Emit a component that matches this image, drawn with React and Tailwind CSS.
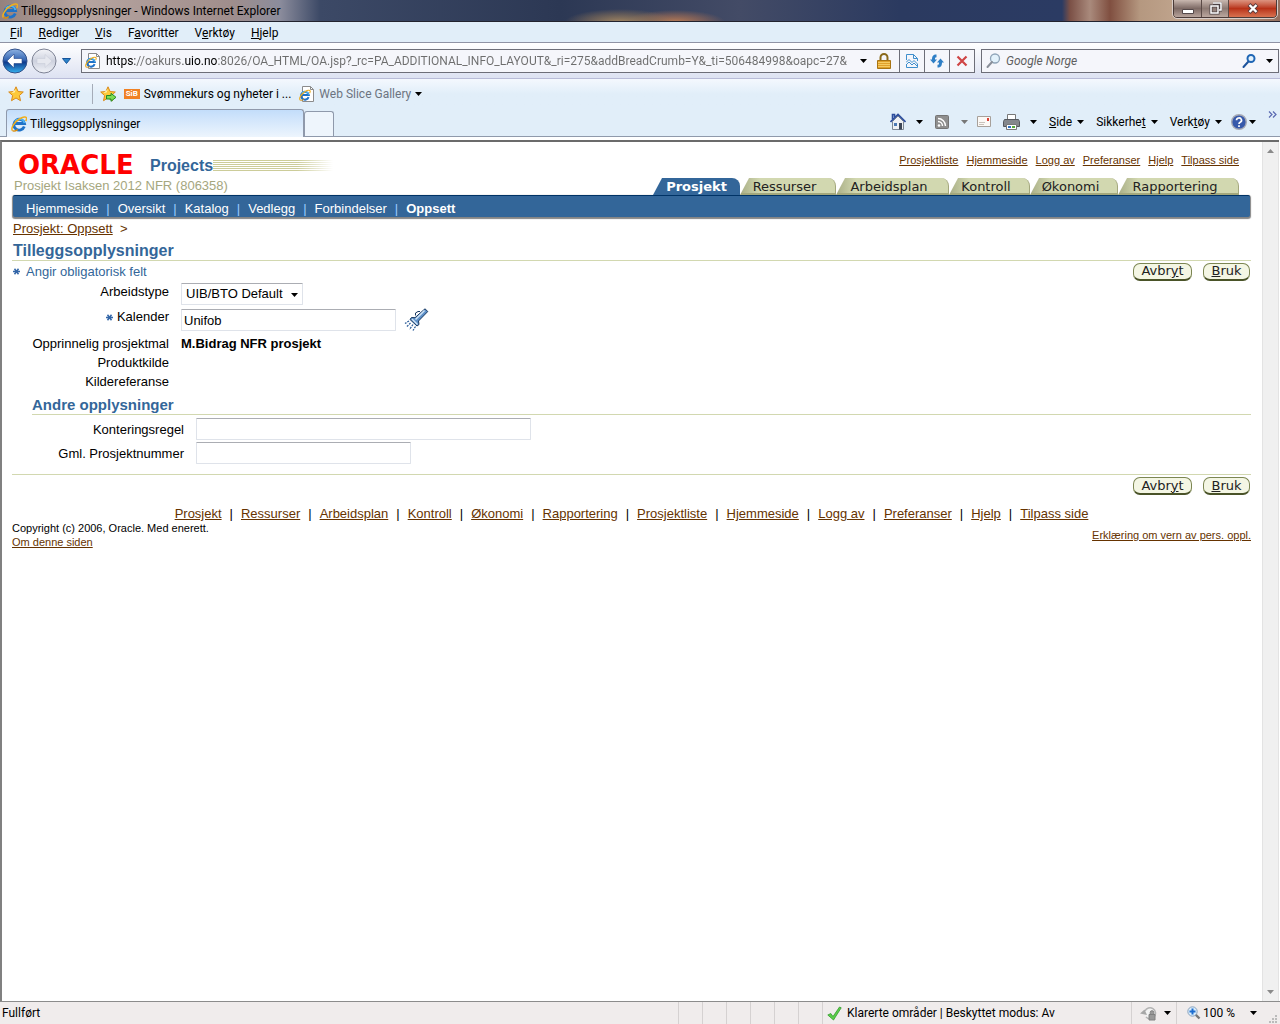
import { useState } from "react";

const topLinks = ["Prosjektliste", "Hjemmeside", "Logg av", "Preferanser", "Hjelp", "Tilpass side"];
const tabs = [
  { name: "Prosjekt", width: "w-[87px]" },
  { name: "Ressurser", width: "w-[96px]" },
  { name: "Arbeidsplan", width: "w-[113px]" },
  { name: "Kontroll", width: "w-[81px]" },
  { name: "Økonomi", width: "w-[88px]" },
  { name: "Rapportering", width: "w-[121px]" },
];
const subTabs = ["Hjemmeside", "Oversikt", "Katalog", "Vedlegg", "Forbindelser", "Oppsett"];
const footerLinks = [...tabs.map((t) => t.name), ...topLinks];

function Caret({ className = "fill-black" }) {
  return (
    <svg width="7" height="4" viewBox="0 0 7 4" className={`shrink-0 ${className}`} aria-hidden="true">
      <path d="M0 0h7L3.5 4z" />
    </svg>
  );
}

function IeMark() {
  return (
    <>
      <path d="M13.3 10.6a5.4 5.4 0 1 1 .2-3.1H4.2" fill="none" stroke="#1f72c8" strokeWidth="2.8" />
      <path d="M13.4 7a5.3 5.3 0 0 0-9.6-1.6" fill="none" stroke="#4db5f2" strokeWidth="1.6" />
      <path d="M1.5 14.6C-.6 12.4 3.4 5.6 9.2 2.5c3-1.6 5.6-2 6.2-.8.4.8.1 2-.7 3.3" fill="none" stroke="#f0ae1c" strokeWidth="1.5" />
      <path d="M1.5 14.6c1.1.9 3.3.2 5.3-1" fill="none" stroke="#d98c0b" strokeWidth="1.3" />
    </>
  );
}

function IeIcon({ page }) {
  if (!page) {
    return (
      <svg width="16" height="16" viewBox="0 0 16 16" className="shrink-0" aria-hidden="true">
        <IeMark />
      </svg>
    );
  }
  return (
    <svg width="16" height="16" viewBox="0 0 16 16" className="shrink-0" aria-hidden="true">
      <path d="M3.5.5h8l3 3v12h-11z" fill="#fff" stroke="#8b8b8b" />
      <path d="M11.5.5v3h3" fill="none" stroke="#8b8b8b" />
      <g transform="translate(0 3.5) scale(.72)">
        <IeMark />
      </g>
    </svg>
  );
}

function Star({ add }) {
  return (
    <svg width="17" height="16" viewBox="0 0 17 16" className="shrink-0" aria-hidden="true">
      <path d="m8 .8 2.1 4.7 5.2.5-3.9 3.5 1.1 5.2L8 12l-4.5 2.7 1.1-5.2L.7 6l5.2-.5z" fill="#fdc93a" stroke="#d98a1c" />
      <path d="M8 3 6.6 6.5 3.5 7z" fill="#fff3b0" />
      {add && <path d="M6.5 9.5h4.5V7.3l5 4-5 4v-2.3H6.5z" fill="#7ddb52" stroke="#238a24" />}
    </svg>
  );
}

function RoundButton({ forward }) {
  return (
    <button type="button" aria-label={forward ? "Frem" : "Tilbake"} className="shrink-0">
      <svg width="26" height="26" viewBox="0 0 26 26">
        <defs>
          <linearGradient id="backFill" x1="0" y1="0" x2="0" y2="1">
            <stop offset="0" stopColor="#8fb3e2" />
            <stop offset=".45" stopColor="#3566b4" />
            <stop offset=".55" stopColor="#0f3a8c" />
            <stop offset="1" stopColor="#35b3f0" />
          </linearGradient>
          <linearGradient id="forwardFill" x1="0" y1="0" x2="0" y2="1">
            <stop offset="0" stopColor="#f4f5f9" />
            <stop offset=".5" stopColor="#cdd1de" />
            <stop offset="1" stopColor="#f1f3f8" />
          </linearGradient>
        </defs>
        <circle cx="13" cy="13" r="12" fill={forward ? "url(#forwardFill)" : "url(#backFill)"} stroke={forward ? "#7d8294" : "#31508a"} />
        <path
          d={forward ? "M21 13l-7-6.5v4H6v5h8v4z" : "M5 13l7-7v4.5h8v5h-8V20z"}
          fill={forward ? "#e6e8ef" : "#fff"}
          stroke={forward ? "#c9cdd8" : "#25468a"}
          strokeWidth=".6"
        />
      </svg>
    </button>
  );
}

function Magnifier({ dark }) {
  return (
    <svg width="15" height="16" viewBox="0 0 15 16" className="shrink-0" aria-hidden="true">
      <circle cx="9" cy="5.5" r={dark ? 3.5 : 4.5} fill="#e2f1fb" stroke={dark ? "#1f66b5" : "#8fa4b8"} strokeWidth={dark ? 2 : 1.3} />
      <path d="M6 9 1.5 14" stroke={dark ? "#1d539c" : "#8a8f99"} strokeWidth="2" strokeLinecap="round" />
    </svg>
  );
}

function TitleBar() {
  return (
    <header className="flex h-[22px] items-start justify-between border-b border-[#22232f] bg-[radial-gradient(ellipse_55px_13px_at_620px_22px,#a08460,#8f755880_60%,transparent),radial-gradient(ellipse_50px_12px_at_675px_22px,#b87a54,#a8705480_60%,transparent),linear-gradient(to_right,#94827e_0px,#b7a5a0_80px,#a08e8c_230px,#8b8c9c_280px,#3c4966_320px,#2c3854_560px,#434b66_740px,#2b3a60_900px,#2b3b63_1062px,#7b5046_1070px,#a98a7c_1090px,#804f40_1110px,#b59880_1140px,#c6ab94_1200px,#94705f_1280px)]">
      <div className="flex items-center gap-[3px] pt-[3px] pl-[2px]">
        <IeIcon />
        <h1 className="text-[12px] leading-4">Tilleggsopplysninger - Windows Internet Explorer</h1>
      </div>
      <div className="mr-[3px] flex h-[18px] overflow-hidden rounded-b-[4px] border border-t-0 border-[#4b3b38] outline outline-[#d9cdc8]">
        <button type="button" aria-label="Minimer" className="flex w-[28px] items-center justify-center border-r border-[#5b4a46] bg-linear-to-b from-[#c9b8b0] via-[#7d6a65] to-[#b8a49c]">
          <svg width="12" height="12" viewBox="0 0 12 12"><path d="M.5 6.5h11v4H.5z" fill="#fff" stroke="#55494a" /></svg>
        </button>
        <button type="button" aria-label="Gjenopprett" className="flex w-[27px] items-center justify-center border-r border-[#5b4a46] bg-linear-to-b from-[#c9b8b0] via-[#8d7a73] to-[#bba79e]">
          <svg width="13" height="13" viewBox="0 0 13 13">
            <path d="M4 1h8v7h-2M2 4h7v7H2z" fill="none" stroke="#4d4244" strokeWidth="3" />
            <path d="M4 1h8v7h-2M2 4h7v7H2z" fill="none" stroke="#fff" strokeWidth="1.5" />
          </svg>
        </button>
        <button type="button" aria-label="Lukk" className="flex w-[47px] items-center justify-center bg-linear-to-b from-[#dc9480] via-[#b83218] to-[#d8714f]">
          <svg width="12" height="11" viewBox="0 0 12 11">
            <path d="m2 1.5 8 8m0-8-8 8" stroke="#5a3a3c" strokeWidth="4" />
            <path d="m2.5 2 7 7m0-7-7 7" stroke="#fff" strokeWidth="2.4" />
          </svg>
        </button>
      </div>
    </header>
  );
}

function MenuBar() {
  const item = "hover:bg-white/60";
  return (
    <nav className="flex h-[21px] items-center gap-4 border-b border-[#8f93a5] bg-[#e1eef9] pt-px pl-[10px] text-[12px]">
      <button type="button" className={item}><u>F</u>il</button>
      <button type="button" className={item}><u>R</u>ediger</button>
      <button type="button" className={item}><u>V</u>is</button>
      <button type="button" className={item}>F<u>a</u>voritter</button>
      <button type="button" className={item}>V<u>e</u>rktøy</button>
      <button type="button" className={item}><u>H</u>jelp</button>
    </nav>
  );
}

function AddressRow() {
  const [url, setUrl] = useState(
    "https://oakurs.uio.no:8026/OA_HTML/OA.jsp?_rc=PA_ADDITIONAL_INFO_LAYOUT&_ri=275&addBreadCrumb=Y&_ti=506484998&oapc=27&"
  );
  const cell = "flex w-[25px] items-center justify-center border-l border-[#6d6e78]";
  return (
    <div className="flex h-[36px] items-center border-b border-[#b9bcd8] bg-linear-to-b from-white to-[#dde2f2] pr-px pl-[2px]">
      <RoundButton />
      <span className="ml-[3px] flex"><RoundButton forward /></span>
      <button type="button" aria-label="Nylige sider" className="px-[5px]">
        <svg width="9" height="6" viewBox="0 0 9 6"><path d="M.5.5h8l-4 5z" fill="#2b82c9" stroke="#17559b" /></svg>
      </button>
      <div className="ml-[5px] flex h-[24px] min-w-0 flex-1 items-stretch border border-[#6d6e78] bg-[#f5f6fb]">
        <div className="flex min-w-0 flex-1 items-center gap-[5px] pl-[3px]">
          <IeIcon page />
          <input
            aria-label="Adresse"
            value={url}
            onChange={(e) => setUrl(e.target.value)}
            className="h-full min-w-0 flex-1 bg-[linear-gradient(to_right,#000_29px,#6d6d6d_29px,#6d6d6d_77px,#000_77px,#000_112px,#6d6d6d_112px)] bg-clip-text text-[12px] text-transparent outline-none"
          />
        </div>
        <button type="button" aria-label="Vis adresser" className="pr-[2px] pl-[6px]"><Caret /></button>
        <span className="flex w-[30px] items-center justify-center">
          <svg width="14" height="16" viewBox="0 0 14 16" aria-label="Sikker side" role="img">
            <path d="M3.5 8V4.5a3.5 3.5 0 0 1 7 0V8" fill="none" stroke="#8b6a1c" strokeWidth="2" />
            <path d="M.5 7.5h13v8H.5z" fill="#e0a02a" stroke="#a87413" />
            <path d="M1 9.5h12M1 11.5h12M1 13.5h12" stroke="#f5cb62" />
          </svg>
        </span>
        <button type="button" aria-label="Kompatibilitetsvisning" className={cell}>
          <svg width="12" height="14" viewBox="0 0 12 14" fill="none" stroke="#3f8fcd">
            <path d="M.5 6V.5h7l4 4V7M7.5.5v4h4M.5 10v3.5h11V10" />
            <path d="m0 8.5 3-3 3 3 2-2 4 4M0 11l3-3 3 3 2-2 3 3" />
          </svg>
        </button>
        <button type="button" aria-label="Oppdater" className={cell}>
          <svg width="14" height="14" viewBox="0 0 14 14" fill="#2f7fc6">
            <path d="M6.5.5v2.700C5 3.200 5 4 5 5.500h2L3.500 9.500 0 5.500h2C2 2.500 3 .5 6.500.5z" />
            <path d="M7.500 13.500v-2.700c1.500 0 1.500-.8 1.500-2.300H7l3.500-4 3.500 4h-2c0 3-1 5-4.500 5z" />
          </svg>
        </button>
        <button type="button" aria-label="Stopp" className={cell}>
          <svg width="12" height="12" viewBox="0 0 12 12"><path d="m1.500 1.500 9 9m0-9-9 9" stroke="#cf4545" strokeWidth="2.200" /></svg>
        </button>
      </div>
      <form className="ml-[6px] flex h-[24px] w-[298px] items-center border border-[#6d6e78] bg-[#f5f6fb] pr-[5px] pl-1">
        <Magnifier />
        <input aria-label="Søk" placeholder="Google Norge" className="ml-[5px] min-w-0 flex-1 text-[12px] italic outline-none placeholder:text-[#5f5f5f]" />
        <button type="button" aria-label="Søk"><Magnifier dark /></button>
        <button type="button" aria-label="Søkealternativer" className="ml-[9px]"><Caret /></button>
      </form>
    </div>
  );
}

function FavoritesRow() {
  return (
    <div className="flex h-[30px] items-center bg-linear-to-b from-[#f4f8fe] to-[#e1eef9] to-50% pl-2 text-[12px]">
      <button type="button" className="flex items-center gap-1"><Star />Favoritter</button>
      <span className="mr-[7px] ml-3 h-5 w-px bg-[#a5acb8]" />
      <button type="button" aria-label="Legg til i favoritter"><Star add /></button>
      <a href="#" className="ml-[7px] flex items-center gap-1">
        <span className="flex h-[10px] w-4 items-center justify-center bg-[#f08124] text-[8px] font-bold text-white">SiB</span>
        Svømmekurs og nyheter i ...
      </a>
      <a href="#" className="ml-2 flex items-center gap-1 text-[#6d7480]"><IeIcon page />Web Slice Gallery <Caret /></a>
    </div>
  );
}

function TabRow() {
  const textButton = "flex items-center gap-[5px]";
  return (
    <div className="flex h-[28px] items-end border-b border-[#8f99ab] bg-[#e1eef9] pl-[6px] text-[12px]">
      <button type="button" className="-mb-px flex h-[28px] w-[298px] items-center gap-[3px] rounded-t-[3px] border border-b-0 border-[#8f99ab] bg-linear-to-b from-[#c3ddfa] to-[#edf5fd] pl-1">
        <IeIcon />Tilleggsopplysninger
      </button>
      <button type="button" aria-label="Ny fane" className="h-[25px] w-[30px] rounded-t-[3px] border border-b-0 border-[#8f99ab] bg-[#eef5fc]" />
      <div className="ml-auto flex h-full items-center pr-[3px] pb-[2px]">
        <button type="button" aria-label="Hjem" className="flex items-center gap-[10px]">
          <svg width="16" height="17" viewBox="0 0 16 17">
            <path d="M2.5 8.5v8h11v-8L8 3z" fill="#eef0f4" stroke="#7d8794" />
            <path d="M.5 9 8 1.5 15.5 9M2.5 6V1.5h2V4" fill="none" stroke="#2c4c9c" strokeWidth="1.6" />
            <path d="M4 10h3v3H4z" fill="#4c79b4" /><path d="M9 10h3v6.5H9z" fill="#3c4658" />
          </svg>
          <Caret />
        </button>
        <button type="button" aria-label="Feeder" className="ml-3 flex items-center gap-3">
          <svg width="14" height="14" viewBox="0 0 14 14">
            <rect x=".5" y=".5" width="13" height="13" rx="1" fill="#8f8f8f" stroke="#747474" />
            <circle cx="4" cy="10.5" r="1.3" fill="#fff" />
            <path d="M3 6.5a4.5 4.5 0 0 1 4.5 4.5M3 3.5a7.500 7.500 0 0 1 7.500 7.500" fill="none" stroke="#fff" strokeWidth="1.400" />
          </svg>
          <Caret className="fill-[#777]" />
        </button>
        <button type="button" aria-label="Les e-post" className="ml-[9px]">
          <svg width="14" height="11" viewBox="0 0 14 11">
            <path d="M.5.5h13v10H.5z" fill="#fbf8f5" stroke="#a7a09a" />
            <path d="M2 6.500h6M2 8.500h5" stroke="#c9c2bb" /><path d="M10 2h2v3h-2z" fill="#dc4035" />
          </svg>
        </button>
        <button type="button" aria-label="Skriv ut" className="ml-3 flex items-center gap-[10px]">
          <svg width="17" height="16" viewBox="0 0 17 16">
            <path d="M4.500.5h8v6h-8z" fill="#fff" stroke="#777" />
            <path d="M1.500 5.500h14l1 2v5H.5v-5z" fill="#84878c" stroke="#55585e" />
            <path d="M3.500 10.500h10v5h-10z" fill="#fff" stroke="#777" />
            <path d="M5 13h3" stroke="#2f6fc0" strokeWidth="2" /><path d="M9 13h3" stroke="#56a83a" strokeWidth="2" />
          </svg>
          <Caret />
        </button>
        <button type="button" className={`ml-3 ${textButton}`}><span><u>S</u>ide</span><Caret /></button>
        <button type="button" className={`ml-3 ${textButton}`}><span>Sikkerhe<u>t</u></span><Caret /></button>
        <button type="button" className={`ml-3 ${textButton}`}><span>Verk<u>t</u>øy</span><Caret /></button>
        <button type="button" aria-label="Hjelp" className="ml-[9px] flex items-center gap-[2px]">
          <svg width="16" height="16" viewBox="0 0 16 16">
            <circle cx="8" cy="8" r="7.300" fill="#3759ab" stroke="#a6a9b4" strokeWidth="1.400" />
            <path d="M5.500 6.300a2.500 2.300 0 1 1 3.700 2C8.300 8.800 8 9.200 8 10M8 11.300v1.600" fill="none" stroke="#fff" strokeWidth="1.700" />
          </svg>
          <Caret />
        </button>
        <button type="button" aria-label="Flere verktøy" className="ml-3 self-start pt-[2px]">
          <svg width="9" height="7" viewBox="0 0 9 7" fill="none" stroke="#5867b0" strokeWidth="1.200"><path d="m1 .5 3 3-3 3m4-6 3 3-3 3" /></svg>
        </button>
      </div>
    </div>
  );
}

function PageLink({ children, className = "" }) {
  return <a href="#" className={`text-[#663300] underline ${className}`}>{children}</a>;
}

function ActionButtons() {
  const pill = "h-[18px] rounded-[7px] border border-b-2 border-[#7c8652] border-b-[#4a5328] bg-[#f4f6e4] font-['DejaVu_Sans',sans-serif] text-[13px] leading-[14px] text-[#222]";
  return (
    <div className="flex gap-[11px] pr-px">
      <button type="button" className={`w-[59px] ${pill}`}>Avbr<u>y</u>t</button>
      <button type="button" className={`w-[47px] ${pill}`}><u>B</u>ruk</button>
    </div>
  );
}

function Asterisk() {
  return (
    <svg width="7" height="7" viewBox="0 0 7 7" className="shrink-0" role="img" aria-label="Obligatorisk">
      <path d="M0 3.500h7M1.500.8l4 5.400m0-5.400-4 5.400" stroke="#3366a8" strokeWidth="1.500" />
    </svg>
  );
}

function Flashlight() {
  return (
    <svg width="25" height="24" viewBox="0 0 25 24" aria-hidden="true">
      <path d="M21 .8 23.800 3.500 14.500 13l.5 3.500-2 1.500L6 11.500l1.500-2 3.500.2z" fill="#5d90c8" stroke="#16365f" />
      <path d="m20.500 2.500-9 9" stroke="#cfe3f6" strokeWidth="1.600" />
      <path d="m8 11 5.500 5.500" stroke="#d5e6f6" strokeWidth="1.300" />
      <path d="M11.500 7.500V5L14 3.500h2" fill="none" stroke="#16365f" />
      <path d="m5 13-4 2.500M6.500 15l-4 4M9 16.500l-3.500 5M11.500 18.500 9 22.500" stroke="#2f5f9a" strokeWidth="1.300" strokeDasharray="2 1" />
    </svg>
  );
}

const field = "h-[22px] rounded-[1px] border border-[#dfe3ea] border-t-[#abadb3] bg-white px-[2px] text-[13px] outline-none";

function Header() {
  return (
    <>
      <div className="flex justify-between">
        <div className="pt-3">
          <div className="flex h-[22px] items-center pl-[6px]">
            <span className="w-[125px] font-['DejaVu_Sans',sans-serif] text-[26px] leading-[22px] font-bold text-[#f00]">ORACLE</span>
            <span className="ml-[7px] pt-px text-[16px] font-bold text-[#336699]">Projects</span>
            <span className="h-[11px] w-[120px] bg-[repeating-linear-gradient(to_bottom,#cccc99_0px,#cccc99_1px,transparent_1px,transparent_2px)] mask-r-from-70%" />
          </div>
          <p className="h-[19px] pl-[2px] leading-[19px] text-[#a5a67e]">Prosjekt Isaksen 2012 NFR (806358)</p>
        </div>
        <div className="flex flex-col items-end justify-between pt-[10px] pr-3">
          <nav className="flex gap-2 text-[11px] leading-4">
            {topLinks.map((link) => <PageLink key={link}>{link}</PageLink>)}
          </nav>
          <nav className="flex font-['DejaVu_Sans',sans-serif] leading-[18px]">
            {tabs.map((tab, i) => (
              <a
                key={tab.name}
                href="#"
                className={`h-[17px] rounded-tr-[8px] text-center [clip-path:polygon(9px_0,100%_0,100%_100%,0_100%)] ${tab.width} ${
                  i === 0
                    ? "bg-[#336699] font-bold text-white"
                    : "border-r border-b-2 border-[#a3a77c] bg-linear-to-r from-[#a9ae86] to-[#d2d8b0] to-[20px] pr-[6px] text-[#222]"
                }`}
              >
                {tab.name}
              </a>
            ))}
          </nav>
        </div>
      </div>
      <nav className="mx-px mb-px flex h-[22px] items-center gap-2 rounded-[2px] border-t border-[#003366] bg-[#336699] pt-[4px] pl-[13px] text-white shadow-[0_1px_1px_1px_#858585]">
        {subTabs.map((name, i) => (
          <span key={name} className="flex gap-2">
            {i > 0 && <span className="text-[#99ccff]">|</span>}
            <a href="#" className={name === "Oppsett" ? "font-bold" : ""}>{name}</a>
          </span>
        ))}
      </nav>
    </>
  );
}

function ProjectForm() {
  const [calendar, setCalendar] = useState("Unifob");
  const label = "w-[157px] shrink-0 text-right";
  return (
    <form>
      <div className="flex h-[20px] items-center justify-between pt-px">
        <p className="flex items-center gap-[6px] pl-px text-[#336699]"><Asterisk />Angir obligatorisk felt</p>
        <ActionButtons />
      </div>
      <div className="flex h-[26px] gap-3 pt-[2px]">
        <label htmlFor="type" className={`leading-[18px] ${label}`}>Arbeidstype</label>
        <div className="relative">
          <select id="type" className={`${field} w-[122px] appearance-none pl-1`}>
            <option>UIB/BTO Default</option>
          </select>
          <span className="pointer-events-none absolute top-[10px] right-[5px]"><Caret /></span>
        </div>
      </div>
      <div className="flex h-[27px] gap-3 pt-[2px]">
        <label htmlFor="calendar" className={`flex items-center justify-end gap-1 self-start leading-4 ${label}`}><Asterisk />Kalender</label>
        <div className="flex items-start gap-2">
          <input id="calendar" value={calendar} onChange={(e) => setCalendar(e.target.value)} className={`${field} w-[215px]`} />
          <button type="button" aria-label="Søk etter kalender" className="-mt-px"><Flashlight /></button>
        </div>
      </div>
      <dl className="grid grid-cols-[157px_1fr] gap-x-3 leading-[19px]">
        <dt className="text-right">Opprinnelig prosjektmal</dt>
        <dd className="font-bold">M.Bidrag NFR prosjekt</dd>
        <dt className="text-right">Produktkilde</dt>
        <dd />
        <dt className="text-right">Kildereferanse</dt>
        <dd />
      </dl>
      <section className="pl-5">
        <h3 className="border-b border-[#d2d8b0] pt-[5px] text-[15px] leading-[18px] font-bold text-[#336699]">Andre opplysninger</h3>
        <div className="grid grid-cols-[152px_1fr] items-center gap-x-3 gap-y-[2px] pt-[3px] pb-[10px]">
          <label htmlFor="rule" className="pt-[2px] text-right">Konteringsregel</label>
          <input id="rule" className={`${field} w-[335px]`} />
          <label htmlFor="number" className="pt-[2px] text-right">Gml. Prosjektnummer</label>
          <input id="number" className={`${field} w-[215px]`} />
        </div>
      </section>
      <div className="flex justify-end border-t border-[#d2d8b0] pt-[2px]"><ActionButtons /></div>
    </form>
  );
}

function Footer() {
  return (
    <footer>
      <nav className="mt-[10px] flex flex-wrap justify-center gap-2 pt-px leading-[15px]">
        {footerLinks.map((link, i) => (
          <span key={i} className="flex gap-2">
            {i > 0 && <span>|</span>}
            <PageLink>{link}</PageLink>
          </span>
        ))}
      </nav>
      <div className="flex items-center justify-between text-[11px] leading-[14px]">
        <div>
          <p>Copyright (c) 2006, Oracle. Med enerett.</p>
          <PageLink>Om denne siden</PageLink>
        </div>
        <PageLink>Erklæring om vern av pers. oppl.</PageLink>
      </div>
    </footer>
  );
}

function StatusBar() {
  return (
    <footer className="flex h-[23px] items-stretch border-t border-[#8c8c8c] bg-[#f0ecec] text-[12px]">
      <p className="flex flex-1 items-center pl-[2px]">Fullført</p>
      {[1, 2, 3, 4, 5, 6].map((n) => <span key={n} className="w-6 border-l border-[#d5d1d1]" />)}
      <div className="flex w-[309px] items-center gap-[5px] border-l border-[#d5d1d1] pl-1">
        <svg width="15" height="15" viewBox="0 0 15 15" aria-hidden="true">
          <path d="m.8 9 3-1.500L6 10.500 12.500 1l1.700.8L6.500 14z" fill="#5ccf4a" stroke="#329a2d" strokeWidth=".8" />
        </svg>
        Klarerte områder | Beskyttet modus: Av
      </div>
      <button type="button" aria-label="Beskyttet modus" className="flex w-[45px] items-center gap-[7px] border-l border-[#d5d1d1] pl-2">
        <svg width="17" height="15" viewBox="0 0 17 15">
          <path d="M5 5a5.500 5.500 0 1 1 1 6" fill="#f3f3f3" stroke="#b3b3b3" strokeWidth="1.500" />
          <path d="M0 7.500 4.500 3.500 7 9z" fill="#a7a7a7" />
          <path d="M9 8.500h6v5.500H9zM10.200 8V6.500a1.800 1.800 0 0 1 3.600 0V8" fill="#999" stroke="#808080" />
        </svg>
        <Caret />
      </button>
      <button type="button" className="flex w-[104px] items-center gap-[2px] border-l border-[#d5d1d1] pl-[10px]">
        <svg width="14" height="14" viewBox="0 0 14 14" aria-hidden="true">
          <path d="m8.500 8.500 4 4" stroke="#777" strokeWidth="2.400" />
          <circle cx="5.500" cy="5.500" r="4.700" fill="#d8ecfb" stroke="#8aa3bd" />
          <path d="M5.500 2.500v6m-3-3h6" stroke="#1c6cd0" strokeWidth="2" />
        </svg>
        100 % <span className="ml-[13px]"><Caret /></span>
        <svg width="9" height="9" viewBox="0 0 9 9" fill="#bbb" className="mr-[2px] ml-auto self-end" aria-hidden="true">
          <path d="M6 0h2v2H6zM3 3h2v2H3zM6 3h2v2H6zM0 6h2v2H0zM3 6h2v2H3zM6 6h2v2H6z" />
        </svg>
      </button>
    </footer>
  );
}

function ScrollBar() {
  return (
    <div className="flex w-[17px] shrink-0 flex-col items-center justify-between border-x border-[#e3e3e3] bg-[#f0f0f0] py-[7px]">
      <svg width="7" height="4" viewBox="0 0 7 4" fill="#8a8a8a" aria-hidden="true"><path d="M0 4h7L3.500 0z" /></svg>
      <Caret className="fill-[#8a8a8a]" />
    </div>
  );
}

export default function App() {
  return (
    <div className="flex min-h-screen flex-col bg-white font-[Roboto,'Open_Sans',sans-serif] text-black">
      <TitleBar />
      <MenuBar />
      <AddressRow />
      <FavoritesRow />
      <TabRow />
      <div className="mt-[3px] mr-px flex flex-1 border-t-2 border-l-2 border-t-[#6b6b6b] border-l-[#808080]">
        <main className="min-w-0 flex-1 pr-[11px] pl-[10px] font-['Liberation_Sans',Arial,sans-serif] text-[13px]">
          <Header />
          <p className="h-[20px] pt-px pl-px leading-[20px] text-[#663300]"><PageLink>Prosjekt: Oppsett</PageLink>&nbsp; &gt;</p>
          <h2 className="border-b border-[#d2d8b0] pt-[4px] pl-px text-[16px] leading-[18px] font-bold text-[#336699]">Tilleggsopplysninger</h2>
          <ProjectForm />
          <Footer />
        </main>
        <ScrollBar />
      </div>
      <StatusBar />
    </div>
  );
}
